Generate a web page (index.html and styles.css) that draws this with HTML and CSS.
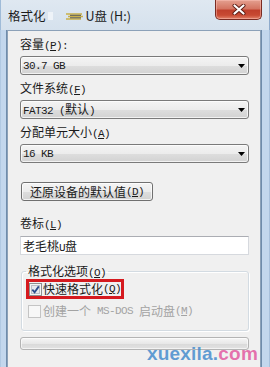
FILE: index.html
```html
<!DOCTYPE html>
<html>
<head>
<meta charset="utf-8">
<link rel="stylesheet" href="styles.css">
</head>
<body>
<div class="win">
  <div class="titlebar">
    <div class="title">格式化<span class="smear"><svg width="36" height="12" viewBox="0 0 36 12"><rect x="0" y="2" width="5" height="8" fill="#eef3f8"/><path d="M18 4 H34 M20 6.5 H35 M18 9 H33" stroke="#c9b04a" stroke-width="1.4"/><path d="M22 5.3 H33 M22 7.8 H33" stroke="#4a4630" stroke-width="0.9"/></svg></span>U盘 (H:)</div>
    <div class="close"><svg width="14" height="11" viewBox="0 0 14 11"><path d="M2.5 1.5 L11.5 9.5 M11.5 1.5 L2.5 9.5" stroke="#5b1c14" stroke-width="4" stroke-linecap="round"/><path d="M2.5 1.5 L11.5 9.5 M11.5 1.5 L2.5 9.5" stroke="#ffffff" stroke-width="2.2" stroke-linecap="round"/></svg></div>
  </div>
  <div class="content">
    <div class="label first">容量<span class="m">(<u>P</u>):</span></div>
    <div class="combo"><span class="m">30.7 GB</span><svg class="arrow" width="7" height="4" viewBox="0 0 7 4"><polygon points="0,0 7,0 3.5,4" fill="#000"/></svg></div>
    <div class="label">文件系统<span class="m">(<u>F</u>)</span></div>
    <div class="combo"><span><span class="m">FAT32 (</span>默认<span class="m">)</span></span><svg class="arrow" width="7" height="4" viewBox="0 0 7 4"><polygon points="0,0 7,0 3.5,4" fill="#000"/></svg></div>
    <div class="label">分配单元大小<span class="m">(<u>A</u>)</span></div>
    <div class="combo"><span class="m">16 KB</span><svg class="arrow" width="7" height="4" viewBox="0 0 7 4"><polygon points="0,0 7,0 3.5,4" fill="#000"/></svg></div>
    <div class="btn">还原设备的默认值<span class="m">(<u>D</u>)</span></div>
    <div class="label vol">卷标<span class="m">(<u>L</u>)</span></div>
    <div class="input">老毛桃<span class="m">U</span>盘</div>
    <fieldset class="group">
      <legend>格式化选项<span class="m">(<u>O</u>)</span></legend>
      <div class="hl">
        <span class="cb"><svg width="13" height="13" viewBox="0 0 13 13"><rect x="0.5" y="0.5" width="12" height="12" fill="#f4f4f4" stroke="#8e8f8f"/><rect x="2.5" y="2.5" width="8" height="8" fill="#e6e9ee" stroke="#b9bfc7"/><path d="M3.3 6.6 L5.6 9.2 L9.8 3.4" stroke="#2b4c8c" stroke-width="1.8" fill="none"/></svg></span>快速格式化<span class="m">(<u>Q</u>)</span>
      </div>
      <div class="row dis">
        <span class="cb"><svg width="13" height="13" viewBox="0 0 13 13"><rect x="0.5" y="0.5" width="12" height="12" fill="#f7f7f7" stroke="#c4c4c4"/></svg></span>创建一个<span class="m"> MS-DOS </span>启动盘<span class="m">(<u>M</u>)</span>
      </div>
    </fieldset>
    <div class="progress"></div>
  </div>
  <div class="watermark">xuexila.<span class="com">com</span></div>
</div>
</body>
</html>
```

FILE: styles.css
```css
html, body {
  margin: 0;
  padding: 0;
}
body {
  width: 270px;
  height: 367px;
  overflow: hidden;
  font-family: "Noto Sans CJK SC", sans-serif;
  font-size: 12px;
  color: #1a1a1a;
}
.win {
  position: relative;
  width: 270px;
  height: 367px;
  background: linear-gradient(90deg, #9fbbd8 0, #c3d7ed 1px, #c3d7ed 6px, #6f8cab 6px, #6f8cab 7px, transparent 7px),
              linear-gradient(270deg, #8eaacb 0, #c3d7ed 1px, #c3d7ed 8px, #6f8cab 8px, #6f8cab 9px, transparent 9px),
              #c3d7ed;
  overflow: hidden;
}
.titlebar {
  height: 30px;
  display: flex;
  align-items: flex-start;
  background: linear-gradient(#dfe8f1, #d5e1ed);
  box-shadow: inset 1px 0 #9fbbd8, inset -1px 0 #8eaacb;
}
.title {
  margin-top: 8px;
  margin-left: 8px;
  line-height: 16px;
  font-size: 12.5px;
  color: #1c1c1c;
  display: flex;
  align-items: center;
}
.smear {
  display: inline-flex;
  margin: 0 2px 0 2px;
}
.close {
  margin-left: auto;
  margin-right: 8px;
  width: 47px;
  height: 20px;
  box-sizing: border-box;
  border: 1px solid #7a2b22;
  border-top: none;
  border-radius: 0 0 5px 5px;
  background: linear-gradient(#e4a090 0%, #d47562 45%, #c0402c 55%, #c84a33 80%, #e2826a 100%);
  box-shadow: inset 0 0 0 1px rgba(255, 200, 190, 0.45);
  display: flex;
  align-items: center;
  justify-content: center;
}
.content {
  margin-left: 7px;
  width: 254px;
  height: 337px;
  box-sizing: border-box;
  border: 1px solid #8ca1b8;
  border-bottom: none;
  background: #f0f0f0;
  padding: 0 11px 0 12px;
}
.m {
  font-family: "Liberation Mono", "DejaVu Sans Mono", monospace;
  font-size: 11px;
  letter-spacing: -0.6px;
}
u {
  text-decoration: underline;
  text-underline-offset: 1px;
}
.label {
  line-height: 16px;
  height: 16px;
  margin-top: 5px;
  white-space: pre;
}
.label.first {
  margin-top: 5px;
}
.combo {
  margin-top: 4px;
  height: 19px;
  box-sizing: border-box;
  border: 1px solid #7a7a7a;
  border-radius: 3px;
  background: linear-gradient(#f4f4f4 0%, #ececec 50%, #dedede 51%, #d2d2d2 100%);
  box-shadow: inset 0 0 0 1px rgba(255, 255, 255, 0.7);
  display: flex;
  align-items: center;
  justify-content: space-between;
  padding: 0 3px 0 2px;
  line-height: 16px;
  white-space: pre;
}
.arrow {
  display: block;
  margin-top: 1px;
}
.btn {
  margin-top: 19px;
  margin-left: 1px;
  width: 132px;
  height: 19px;
  box-sizing: border-box;
  border: 1px solid #707070;
  border-radius: 3px;
  background: linear-gradient(#f4f4f4 0%, #ececec 50%, #dedede 51%, #d2d2d2 100%);
  box-shadow: inset 0 0 0 1px rgba(255, 255, 255, 0.7);
  display: flex;
  align-items: center;
  justify-content: center;
  line-height: 16px;
}
.label.vol {
  margin-top: 14px;
}
.input {
  margin-top: 5px;
  height: 19px;
  box-sizing: border-box;
  border: 1px solid #d6d9de;
  border-top-color: #abadb3;
  background: #ffffff;
  padding: 0 2px;
  line-height: 17px;
}
.group {
  margin: 8px 0 0 1px;
  width: 228px;
  height: 68px;
  box-sizing: border-box;
  border: 1px solid #d3dbe2;
  border-radius: 3px;
  box-shadow: inset 1px 1px #ffffff, 1px 1px #ffffff;
  padding: 0 4px 0 4px;
  min-width: 0;
}
.group legend {
  padding: 0 2px;
  margin-left: 0;
  line-height: 16px;
  height: 16px;
  white-space: pre;
}
.hl {
  display: flex;
  align-items: center;
  width: fit-content;
  height: 20px;
  box-sizing: border-box;
  border: 3px solid #d51a1f;
  padding: 0;
  line-height: 14px;
}
.hl .cb {
  margin-right: 1px;
}
.cb {
  display: flex;
}
.row {
  display: flex;
  align-items: center;
  margin-top: 4px;
  height: 16px;
  padding-left: 2px;
  line-height: 16px;
  white-space: pre;
}
.row .cb {
  margin-right: 2px;
}
.dis {
  color: #a3a3a3;
}
.progress {
  margin-top: 6px;
  width: 229px;
  height: 13px;
  box-sizing: border-box;
  border: 1px solid #b4b4b4;
  border-radius: 3px;
  background: linear-gradient(#f6f6f6 0%, #e8e8e8 50%, #dadada 55%, #e2e2e2 100%);
  box-shadow: inset 0 0 0 1px rgba(255, 255, 255, 0.6);
}
.watermark {
  position: absolute;
  left: 147px;
  top: 343px;
  font-family: "Liberation Sans", Arial, sans-serif;
  font-weight: bold;
  font-size: 19px;
  line-height: 22px;
  color: rgba(70, 140, 205, 0.85);
  letter-spacing: 0.2px;
}
.watermark .com {
  color: rgba(226, 90, 160, 0.85);
}
```
